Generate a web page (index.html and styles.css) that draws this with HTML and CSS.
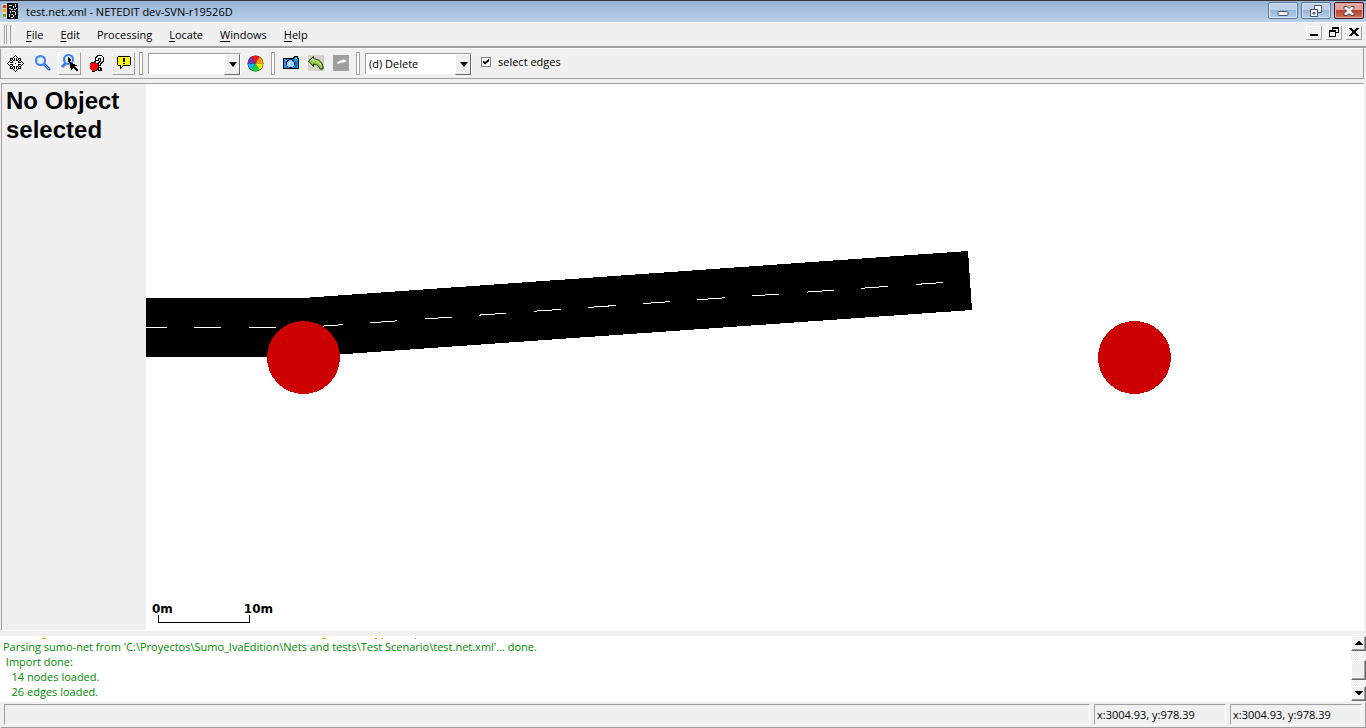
FILE: index.html
```html
<!DOCTYPE html>
<html lang="en">
<head>
<meta charset="utf-8">
<title>test.net.xml - NETEDIT dev-SVN-r19526D</title>
<link rel="stylesheet" href="styles.css">
</head>
<body>
<div class="app">
  <header class="titlebar">
    <svg class="app-icon" width="16" height="16" viewBox="0 0 16 16" shape-rendering="crispEdges" aria-hidden="true">
      <path fill="#d8d2b8" d="M0 1h5v14H0z"/><path fill="#111" d="M5 0h11v16H5z"/>
      <path fill="#e33b20" d="M1 2h3v3H1z"/><path fill="#f2a41d" d="M1 6h3v3H1z"/><path fill="#42b02c" d="M1 11h3v3H1z"/>
      <path fill="#ddd" d="M7 2h3v1H7zM11 3h1v2h-1zM13 1h1v3h-1zM7 5h2v1H7zM9 6h2v1H9zM12 6h2v1h-2zM8 8h1v2H8zM10 8h3v1h-3zM13 9h1v3h-1zM7 11h1v3H7zM9 11h2v1H9zM11 12h1v2h-1zM9 14h2v1H9zM14 5h1v1h-1z"/>
    </svg>
    <h1 class="title">test.net.xml - NETEDIT dev-SVN-r19526D</h1>
    <div class="win-buttons">
      <button class="win-btn" aria-label="Minimize"><svg width="12" height="12" viewBox="0 0 12 12"><rect x="1" y="6.500" width="10" height="4" rx="1" fill="#f5f5f5" stroke="#4d5566"/></svg></button>
      <button class="win-btn" aria-label="Restore"><svg width="12" height="12" viewBox="0 0 12 12"><path d="M4.500.5h7v7h-7z" fill="#f5f5f5" stroke="#4d5566"/><path d="M.5 4.500h7v7h-7z" fill="#f5f5f5" stroke="#4d5566"/><path d="M3 7.500h2v1.500H3z" fill="#9db8d8" stroke="#4d5566"/></svg></button>
      <button class="win-btn win-close" aria-label="Close"><svg width="12" height="12" viewBox="0 0 12 12"><path d="M1 1.500h3l2 2 2-2h3v2L8.500 6 11 8.500v2H8l-2-2-2 2H1v-2L3.500 6 1 3.500z" fill="#f5f5f5" stroke="#4d4050"/></svg></button>
    </div>
  </header>

  <nav class="menubar">
    <span class="menu-grip"></span>
    <button class="menu"><u>F</u>ile</button>
    <button class="menu"><u>E</u>dit</button>
    <button class="menu">Processing</button>
    <button class="menu"><u>L</u>ocate</button>
    <button class="menu"><u>W</u>indows</button>
    <button class="menu"><u>H</u>elp</button>
    <div class="mdi-buttons">
      <button class="mdi-btn" aria-label="Minimize view"><svg width="12" height="12" viewBox="0 0 12 12" shape-rendering="crispEdges"><path d="M2 8h8v2H2z"/></svg></button>
      <button class="mdi-btn" aria-label="Restore view"><svg width="12" height="12" viewBox="0 0 12 12" shape-rendering="crispEdges"><path fill-rule="evenodd" d="M4 1h7v6H8v4H1V4h3zM5 3v1h3v2h2V3zM2 6v4h5V6z"/></svg></button>
      <button class="mdi-btn" aria-label="Close view"><svg width="12" height="12" viewBox="0 0 12 12" shape-rendering="crispEdges"><path d="M1 2h3v1h1v1h2V3h1V2h3v1h-1v1H9v1H8v2h1v1h1v1h1v1H8V9H7V8H5v1H4v1H1V9h1V8h1V7h1V5H3V4H2V3H1z"/></svg></button>
    </div>
  </nav>

  <div class="toolbar">
    <div class="tool-group">
      <button class="tool" aria-label="Recenter view"><svg width="17" height="17" viewBox="0 0 17 17" shape-rendering="crispEdges"><path fill="#fff" stroke="#000" d="M8.500.5l2 2-1 1v2h1l1-1V3.500h2v2h-1l-1 1v1h2l1-1 2 2-2 2-1-1h-2v1l1 1h1v2h-2v-1l-1-1h-1v2l1 1-2 2-2-2 1-1v-2h-1l-1 1v1h-2v-2h1l1-1v-1h-2l-1 1-2-2 2-2 1 1h2v-1l-1-1h-1v-2h2v1l1 1h1v-2l-1-1z"/><path d="M8 8h1v1H8z"/></svg></button>
      <button class="tool" aria-label="Zoom"><svg width="16" height="16" viewBox="0 0 16 16"><path stroke="#2f61d8" stroke-width="3" stroke-linecap="round" d="M9 9l5 5"/><path stroke="#62b4f5" d="M9 9l5 5"/><circle cx="5.500" cy="5.500" r="4.500" fill="#e6eff2" stroke="#3b7eea" stroke-width="2"/><path fill="none" stroke="#7ed0f8" d="M2 6a4 4 0 0 1 4-4"/></svg></button>
      <button class="tool raised" aria-label="Edit viewport"><svg width="18" height="18" viewBox="0 0 18 18"><path stroke="#3b7eea" stroke-width="3" d="M5 9l-4 4"/><circle cx="7.500" cy="5.500" r="4.500" fill="#e6eff2" stroke="#3b7eea" stroke-width="2"/><path shape-rendering="crispEdges" d="M7 3h1v1h1v1h1v2H9v1H7zM8 8h2v1h2v1h2v1h2v1h-2v1h1v1h1v1h1v2h-2v-1h-1v-1h-1v-1h-1v1h-1v1h-1v-2h-1v-3H9v-2H8z"/></svg></button>
      <button class="tool" aria-label="Locate"><svg width="16" height="18" viewBox="0 0 16 18" shape-rendering="crispEdges"><path d="M8 1h5v1h1v1h1v5h-1v1h-1v1h-1v2H9V8h1V7h1V5h-1v2H7V6H6V3h1V2h1zM9 13h3v1h1v3H9v-1H8v-2h1z"/><path fill="#fff" d="M8 3h1V2h4v1h1v4h-1v1h-1v1h-1v2h-1V9h1V8h1V4H9v2H7V4h1zM10 14h1v2h-1z"/><path fill="#f00" d="M2 9h2V8h3v1h1v1h1v4H8v2H6v1H3v-1H2v-1H1v-5h1z"/><path d="M4 8h1V7h1V6h1v2H6v1H4zM2 8h2v1H2zM1 9h1v1H1zM8 9h1v1H8zM9 10h1v4H9zM8 14h1v2H8zM6 16h2v1H6zM3 17h3v1H3z"/></svg></button>
      <button class="tool raised" aria-label="Toggle tooltips"><svg width="16" height="16" viewBox="0 0 16 16" shape-rendering="crispEdges"><path fill="#ff0" stroke="#000" d="M2.500 1.500h11l1 1v7l-1 1h-6l-3 3v-3h-2l-1-1v-7z"/><path d="M7 3h2v4H7zM7 8h2v1H7z"/></svg></button>
    </div>
    <span class="grip"></span>
    <div class="combo combo-scheme"><select aria-label="View settings"><option></option></select></div>
    <button class="tool" aria-label="Edit coloring schemes"><svg width="17" height="17" viewBox="0 0 17 17"><circle cx="8.500" cy="8.500" r="8" fill="#222"/><path fill="#f21818" d="M8.500 8.500L4.500 2a7.500 7.500 0 0 1 8 0z"/><path fill="#ff9a00" d="M8.500 8.500l4-6.500A7.500 7.500 0 0 1 16 8.500z"/><path fill="#f8f000" d="M8.500 8.500H16a7.500 7.500 0 0 1-3.500 6.500z"/><path fill="#13d834" d="M8.500 8.500l4 6.500a7.500 7.500 0 0 1-8 0z"/><path fill="#18b4f4" d="M8.500 8.500l-4 6.500A7.500 7.500 0 0 1 1 8.500z"/><path fill="#7436b8" d="M8.500 8.500H1A7.500 7.500 0 0 1 4.500 2z"/></svg></button>
    <span class="grip"></span>
    <div class="tool-group tight">
      <button class="tool" aria-label="Make snapshot"><svg width="16" height="14" viewBox="0 0 16 14" shape-rendering="crispEdges"><path fill="#1795ee" stroke="#000" d="M.5 2.500h10v-1h1v-1h3v2h1v10H.5z"/><path fill="#7cc9f8" d="M2 4h2v1H2zM12 2h2v1h-2z"/><circle cx="7.500" cy="7.500" r="4" fill="#8fd6ff" stroke="#003"/><path fill="#fff" d="M6 6h2v1H7v2H6z"/><path fill="#0668b8" d="M12 5h2v7h-2z"/></svg></button>
      <button class="tool" aria-label="Undo"><svg width="16" height="16" viewBox="0 0 16 16"><path fill="#d4d0c8" d="M0 0h16v16H0z"/><path fill="#8fcf4c" stroke="#1c2c10" d="M.5 6l5-4.500V4c5 0 9 3 9.500 8v2h-3c-1-3-3-5-6.500-5v2.500z"/><path fill="none" stroke="#d2f3a4" d="M2 6l3-2.500V5c4 0 6 1.500 8 5"/></svg></button>
      <button class="tool" aria-label="Redo"><svg width="16" height="16" viewBox="0 0 16 16"><path fill="#a0a0a0" d="M0 0h16v16H0z"/><path fill="#fff" d="M4 8l2-2 4-1V4l4 2-3 1.500H8L5 9z"/></svg></button>
    </div>
    <span class="grip"></span>
    <div class="combo combo-mode"><select aria-label="Edit mode"><option>(d) Delete</option></select></div>
    <label class="check"><input type="checkbox" checked><span>select edges</span></label>
  </div>

  <main class="workspace">
    <aside class="inspector"><h2>No Object selected</h2></aside>
    <section class="canvas">
      <svg class="network" width="100%" height="100%" shape-rendering="crispEdges" role="img" aria-label="Network view">
        <path d="M0 214H157L822 167L826 226L157 273H0z"/>
        <path stroke="#fff" fill="none" d="M0 243.500h21M48 243.500h27M103 243.500h27"/>
        <path stroke="#fff" fill="none" stroke-dasharray="27.300 27.400" d="M169.500 242.600L797 198.500"/>
        <circle cx="157.500" cy="273.500" r="36.500" fill="#c00"/>
        <circle cx="988.500" cy="273.500" r="36.500" fill="#c00"/>
      </svg>
      <div class="scale">
        <div class="scale-labels"><span>0m</span><span>10m</span></div>
        <div class="scale-bar"></div>
      </div>
    </section>
  </main>

  <section class="log">
    <div class="log-text">
      <svg class="log-clip" width="420" height="2" shape-rendering="crispEdges" aria-hidden="true"><path fill="#f0a000" d="M42 1h4v1h-4zM322 1h4v1h-4zM375 1h2v1h-2zM381 1h2v1h-2zM415 1h1v1h-1z"/></svg>
      <pre>Parsing sumo-net from 'C:\Proyectos\Sumo_IvaEdition\Nets and tests\Test Scenario\test.net.xml'... done.
 Import done:
   14 nodes loaded.
   26 edges loaded.</pre>
    </div>
    <div class="scrollbar">
      <button class="sb-btn" aria-label="Scroll up"><svg width="8" height="4" viewBox="0 0 8 4" shape-rendering="crispEdges"><path d="M3 0h2v1h1v1h1v1h1v1H0V3h1V2h1V1h1z"/></svg></button>
      <div class="sb-track"><div class="sb-thumb"></div></div>
      <button class="sb-btn" aria-label="Scroll down"><svg width="8" height="4" viewBox="0 0 8 4" shape-rendering="crispEdges"><path d="M0 0h8v1H7v1H6v1H5v1H3V3H2V2H1V1H0z"/></svg></button>
    </div>
  </section>

  <footer class="status">
    <div class="cell grow"></div>
    <div class="cell coord">x:3004.93, y:978.39</div>
    <div class="cell coord">x:3004.93, y:978.39</div>
  </footer>
</div>
</body>
</html>
```
FILE: styles.css
```css
* { box-sizing: border-box; }
body, h1, h2, pre { margin: 0; }
body { background: #f0f0f0; color: #000; font: 11px/15px "Open Sans", "Noto Sans", sans-serif; }
button, select { font: inherit; color: inherit; margin: 0; padding: 0; border: 0; background: none; }
svg { display: block; flex: none; }

.app { display: flex; flex-direction: column; height: 100vh; overflow: hidden; }

.titlebar { display: flex; align-items: center; height: 22px; flex: none; padding: 0 2px; border-top: 1px solid #33363c; background: linear-gradient(#98b4d3, #b9d1ea); }
.app-icon { margin-bottom: 2px; }
.title { flex: 1; margin-left: 8px; padding-bottom: 1px; font-size: 11px; font-weight: 400; }
.win-buttons { display: flex; gap: 3px; align-self: flex-start; padding-top: 1px; }
.win-btn { display: grid; place-items: center; width: 30px; height: 17px; border: 1px solid #5f7796; border-radius: 2px; box-shadow: inset 0 0 0 1px #d6e5f5; background: linear-gradient(#bdd2e9 45%, #98b6d6 50%, #b4cfea); }
.win-close { border-color: #4b1119; box-shadow: inset 0 0 0 1px #e3aaa0; background: linear-gradient(#dfa59b 45%, #bd412b 50%, #cf7456); }

.menubar { display: flex; align-items: center; gap: 1px; height: 26px; flex: none; padding: 0 4px; border-top: 1px solid #fff; border-bottom: 2px solid #a0a0a0; }
.menu-grip { width: 7px; height: 19px; margin-right: 6px; border: solid #a0a0a0; border-width: 0 1px; box-shadow: inset 1px 0 #fff, inset -3px 0 #f0f0f0, inset -4px 0 #a0a0a0; }
.menu { padding: 0 8px; }
.menu u { text-underline-offset: 2px; }
.mdi-buttons { display: flex; gap: 4px; margin-left: auto; margin-bottom: 4px; }
.mdi-btn { display: grid; place-items: center; width: 16px; height: 14px; border: solid #a0a0a0; border-width: 0 1px 1px 0; box-shadow: inset 1px 1px #fff; }

.toolbar { display: flex; align-items: center; height: 31px; flex: none; margin-right: 2px; padding: 0 0 1px 3px; border: 1px solid #a0a0a0; border-top-color: #fff; }
.tool-group { display: flex; gap: 4px; }
.tight { gap: 2px; }
.tool { display: grid; place-items: center; width: 23px; height: 23px; flex: none; }
.raised { border: 1px solid; border-color: #fff #a0a0a0 #a0a0a0 #fff; }
.grip { width: 4px; height: 23px; margin: 0 4px; flex: none; border: 1px solid #a0a0a0; background: #fff; }
.combo { position: relative; height: 21px; flex: none; border: 1px solid; border-color: #a0a0a0 #fff #fff #a0a0a0; background: #fff; }
.combo select { appearance: none; width: 100%; height: 100%; padding: 1px 16px 0 3px; outline: none; }
.combo::before { content: ""; position: absolute; right: 0; top: 0; width: 14px; height: 100%; border: 1px solid; border-color: #fff #696969 #696969 #fff; background: #f0f0f0; pointer-events: none; }
.combo::after { content: ""; position: absolute; right: 3px; top: 8px; border: solid transparent; border-width: 5px 4px 0; border-top-color: #000; pointer-events: none; }
.combo-scheme { width: 93px; margin: 0 3px 0 1px; }
.combo-mode { width: 107px; margin-left: 1px; }
.check { display: flex; align-items: center; gap: 7px; margin: 0 0 3px 9px; }
.check input { appearance: none; display: grid; place-items: center; width: 10px; height: 10px; margin: 0; border: 1px solid #808080; background: #fff; }
.check input:checked::before { content: ""; width: 6px; height: 6px; background: #000; clip-path: polygon(0 30%, 35% 60%, 100% 0, 100% 45%, 35% 100%, 0 70%); }

.workspace { display: flex; flex: 1; min-height: 0; margin: 4px 2px 0 1px; border: solid #a0a0a0; border-width: 1px 0 0 1px; border-bottom: 1px solid #fff; background: #fff; }
.inspector { width: 144px; flex: none; padding: 2px 4px; background: #f0f0f0; }
.inspector h2 { font: bold 24px/29px "Liberation Sans", Arial, sans-serif; }
.canvas { position: relative; flex: 1; min-width: 0; overflow: hidden; }
.network { position: absolute; inset: 0; }
.scale { position: absolute; left: 6px; bottom: 7px; width: 121px; font: bold 12px/12px "DejaVu Sans", sans-serif; }
.scale-labels { display: flex; justify-content: space-between; }
.scale-bar { width: 92px; height: 8px; margin-left: 6px; border: 1px solid #000; border-top: 0; }

.log { display: flex; height: 66px; flex: none; margin-top: 5px; background: #fff; color: #008b00; }
.log-text { flex: 1; min-width: 0; overflow: hidden; padding: 1px 0 0 3px; }
.log-clip { margin-left: -3px; }
.log-text pre { font: inherit; }
.scrollbar { display: flex; flex-direction: column; width: 15px; flex: none; padding-bottom: 1px; }
.sb-btn, .sb-thumb { border: 1px solid; border-color: #fff #696969 #696969 #fff; box-shadow: inset -1px -1px #a0a0a0; background: #f0f0f0; }
.sb-btn { display: grid; place-items: center; width: 15px; height: 15px; padding-bottom: 1px; }
.sb-track { flex: 1; padding-top: 9px; background: repeating-conic-gradient(#fff 0 25%, #eaeaea 0 50%) 0 0 / 2px 2px; }
.sb-thumb { height: 20px; }

.status { display: flex; gap: 4px; height: 26px; flex: none; margin-left: 1px; padding: 2px 3px 3px; border: solid #a0a0a0; border-width: 0 1px 1px 0; }
.cell { height: 21px; padding: 2px; border: 1px solid; border-color: #a0a0a0 #fff #fff #a0a0a0; line-height: 16px; white-space: nowrap; }
.grow { flex: 1; }
.coord { width: 132px; }
```
